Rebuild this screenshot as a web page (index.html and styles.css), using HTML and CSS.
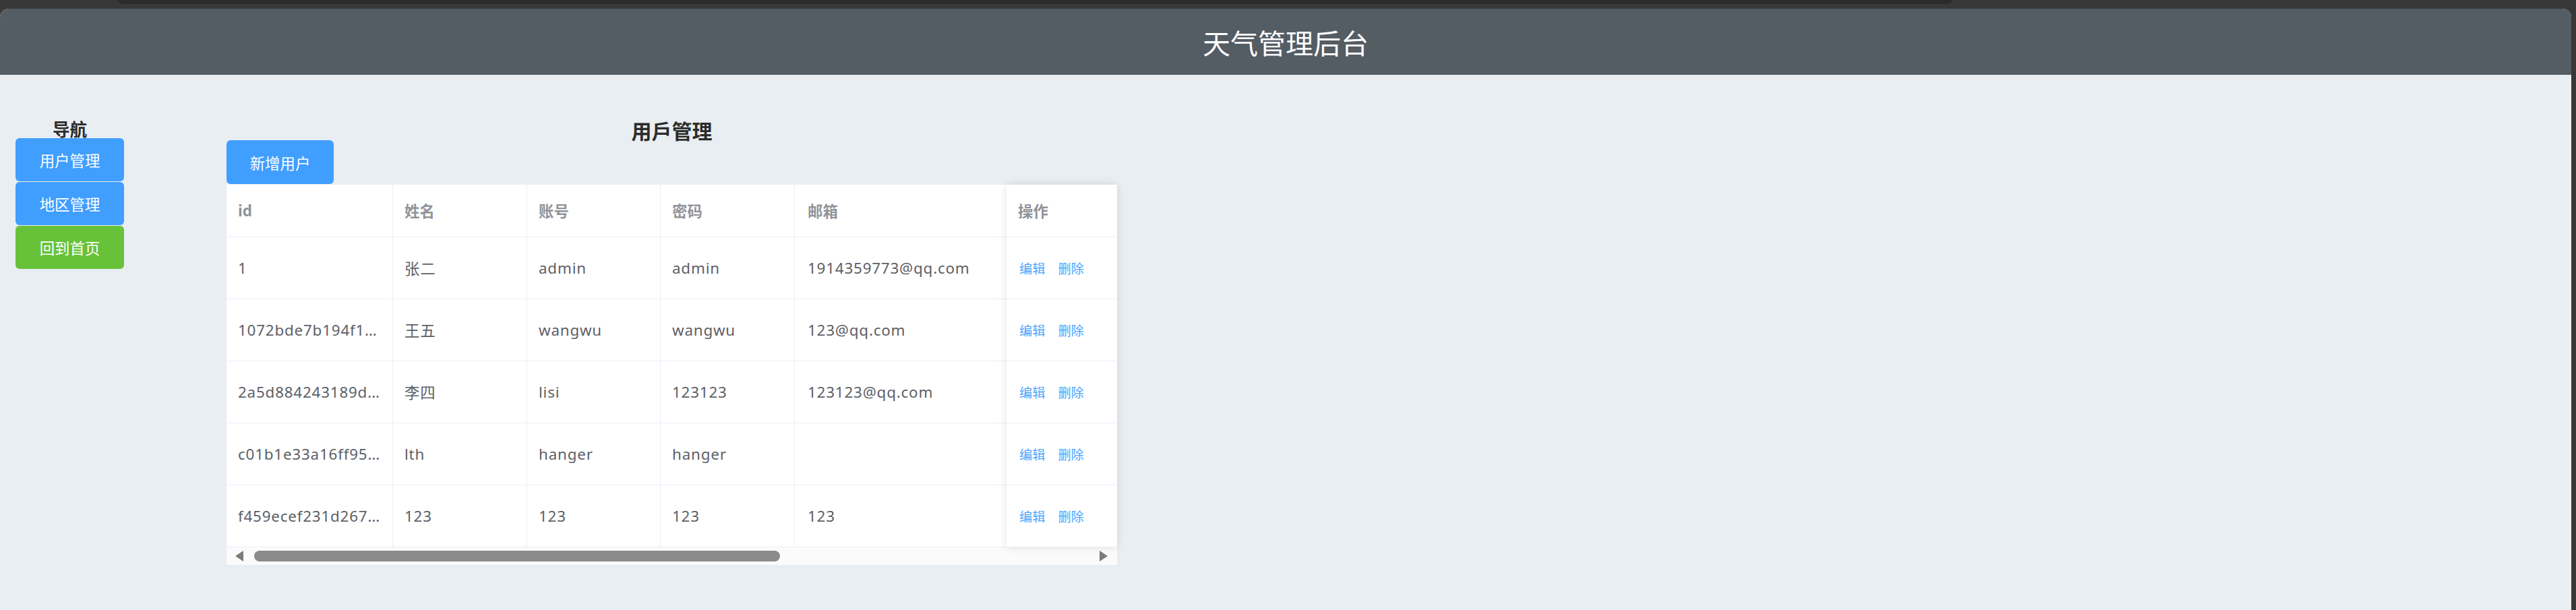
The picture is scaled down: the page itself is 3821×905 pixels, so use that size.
FILE: index.html
```html
<!DOCTYPE html>
<html lang="zh-CN">
<head>
<meta charset="utf-8">
<title>天气管理后台</title>
<link rel="stylesheet" href="styles.css">
</head>
<body>
<div class="topbar"><div class="tab"></div></div>
<div class="app">
  <header class="header">天气管理后台</header>
  <div class="main">
    <aside class="aside">
      <h4 class="nav-title">导航</h4>
      <div class="nav-btn blue">用户管理</div>
      <div class="nav-btn blue">地区管理</div>
      <div class="nav-btn green">回到首页</div>
    </aside>
    <section class="content">
      <h3 class="page-title">用戶管理</h3>
      <div class="add-btn">新增用户</div>
      <div class="table">
        <div class="table-scroll">
          <div class="row head">
            <div class="cell c-id">id</div>
            <div class="cell c-name">姓名</div>
            <div class="cell c-acc">账号</div>
            <div class="cell c-pwd">密码</div>
            <div class="cell c-mail">邮箱</div>
            <div class="cell c-rest"></div>
          </div>
          <div class="row">
            <div class="cell c-id">1</div>
            <div class="cell c-name">张二</div>
            <div class="cell c-acc">admin</div>
            <div class="cell c-pwd">admin</div>
            <div class="cell c-mail">1914359773@qq.com</div>
            <div class="cell c-rest"></div>
          </div>
          <div class="row">
            <div class="cell c-id">1072bde7b194f1…</div>
            <div class="cell c-name">王五</div>
            <div class="cell c-acc">wangwu</div>
            <div class="cell c-pwd">wangwu</div>
            <div class="cell c-mail">123@qq.com</div>
            <div class="cell c-rest"></div>
          </div>
          <div class="row">
            <div class="cell c-id">2a5d884243189d…</div>
            <div class="cell c-name">李四</div>
            <div class="cell c-acc">lisi</div>
            <div class="cell c-pwd">123123</div>
            <div class="cell c-mail">123123@qq.com</div>
            <div class="cell c-rest"></div>
          </div>
          <div class="row">
            <div class="cell c-id">c01b1e33a16ff95…</div>
            <div class="cell c-name">lth</div>
            <div class="cell c-acc">hanger</div>
            <div class="cell c-pwd">hanger</div>
            <div class="cell c-mail"></div>
            <div class="cell c-rest"></div>
          </div>
          <div class="row">
            <div class="cell c-id">f459ecef231d267…</div>
            <div class="cell c-name">123</div>
            <div class="cell c-acc">123</div>
            <div class="cell c-pwd">123</div>
            <div class="cell c-mail">123</div>
            <div class="cell c-rest"></div>
          </div>
        </div>
        <div class="fixed-right">
          <div class="row head"><div class="cell c-op">操作</div></div>
          <div class="row"><div class="cell c-op"><span class="link">编辑</span><span class="link">删除</span></div></div>
          <div class="row"><div class="cell c-op"><span class="link">编辑</span><span class="link">删除</span></div></div>
          <div class="row"><div class="cell c-op"><span class="link">编辑</span><span class="link">删除</span></div></div>
          <div class="row"><div class="cell c-op"><span class="link">编辑</span><span class="link">删除</span></div></div>
          <div class="row"><div class="cell c-op"><span class="link">编辑</span><span class="link">删除</span></div></div>
        </div>
        <div class="scrollbar">
          <div class="arrow left"></div>
          <div class="track"><div class="thumb"></div></div>
          <div class="arrow right"></div>
        </div>
      </div>
    </section>
  </div>
</div>
</body>
</html>
```

FILE: styles.css
```css
* { box-sizing: border-box; }

html, body {
  margin: 0;
  padding: 0;
  height: 905px;
  overflow: hidden;
  background: #383838;
  font-family: "Noto Sans", "Noto Sans CJK SC", sans-serif;
}

.topbar {
  height: 13px;
  padding-left: 175px;
}

.tab {
  width: 2720px;
  height: 6px;
  background: #2b2b2b;
  border-radius: 0 0 7px 7px;
}

.app {
  width: 3814px;
  height: 892px;
  background: #e9eef3;
  border-radius: 13px 13px 0 0;
  overflow: hidden;
}

.header {
  height: 98px;
  background: #545c64;
  color: #fff;
  font-family: "Noto Sans CJK SC", sans-serif;
  font-size: 41px;
  line-height: 98px;
  text-align: center;
}

.main {
  display: flex;
  align-items: flex-start;
}

.aside {
  width: 207px;
  padding-top: 67px;
  display: flex;
  flex-direction: column;
  align-items: center;
}

.nav-title {
  margin: 0 0 1px;
  font-family: "Noto Sans CJK SC", sans-serif;
  font-size: 25.6px;
  line-height: 26px;
  font-weight: 700;
  color: #2c2c2c;
}

.nav-btn {
  width: 161px;
  height: 64px;
  margin-bottom: 1px;
  border-radius: 6px;
  color: #fff;
  font-family: "Noto Sans CJK SC", sans-serif;
  font-size: 22.4px;
  display: flex;
  align-items: center;
  justify-content: center;
}

.blue { background: #409eff; }
.green { background: #67c23a; }

.content {
  margin-left: 129px;
  width: 1321px;
  padding-top: 67px;
}

.page-title {
  margin: 0;
  font-family: "Noto Sans CJK SC", sans-serif;
  font-size: 30px;
  line-height: 30px;
  font-weight: 700;
  color: #2c2c2c;
  text-align: center;
}

.add-btn {
  width: 159px;
  height: 65px;
  margin-bottom: 1px;
  border-radius: 6px;
  background: #409eff;
  color: #fff;
  font-family: "Noto Sans CJK SC", sans-serif;
  font-size: 22.4px;
  display: flex;
  align-items: center;
  justify-content: center;
}

.table {
  position: relative;
  width: 1321px;
  background: #fff;
}

.table-scroll {
  overflow: hidden;
}

.row {
  display: flex;
  height: 92px;
  border-bottom: 1px solid #ebeef5;
  width: max-content;
}

.row.head {
  height: 78px;
}

.cell {
  flex: none;
  display: flex;
  align-items: center;
  padding: 0 17px;
  border-right: 1px solid #ebeef5;
  white-space: nowrap;
  overflow: hidden;
  font-size: 22.4px;
  letter-spacing: 0.8px;
  color: #5e6066;
}

.head .cell {
  color: #909399;
  font-weight: 700;
  letter-spacing: 0;
}

.c-id { width: 247px; }
.c-name { width: 199px; }
.c-acc { width: 198px; }
.c-pwd { width: 199px; }
.c-mail { width: 420px; padding-left: 19px; }
.c-rest { width: 874px; }

.fixed-right {
  position: absolute;
  top: 0;
  right: 0;
  width: 164px;
  background: #fff;
  box-shadow: 0 0 12px rgba(0, 0, 0, 0.12);
}

.fixed-right .row {
  width: 164px;
}

.c-op {
  width: 164px;
  border-right: none;
  padding-left: 17px;
  letter-spacing: 0;
}

.link {
  font-family: "Noto Sans CJK SC", sans-serif;
  font-size: 19.2px;
  color: #4aa3ff;
  margin-left: 2px;
}

.link + .link {
  margin-left: 19px;
}

.scrollbar {
  height: 26px;
  background: #fbfbfb;
  display: flex;
  align-items: center;
  padding: 0 14px 0 13px;
}

.track {
  flex: 1;
  height: 16px;
  padding-left: 16px;
  padding-right: 474px;
}

.thumb {
  height: 16px;
  background: #8b8b8b;
  border-radius: 8px;
}

.arrow {
  width: 0;
  height: 0;
  border-top: 8px solid transparent;
  border-bottom: 8px solid transparent;
}

.arrow.left {
  border-right: 12px solid #7b7b7b;
}

.arrow.right {
  border-left: 12px solid #7b7b7b;
}
```
